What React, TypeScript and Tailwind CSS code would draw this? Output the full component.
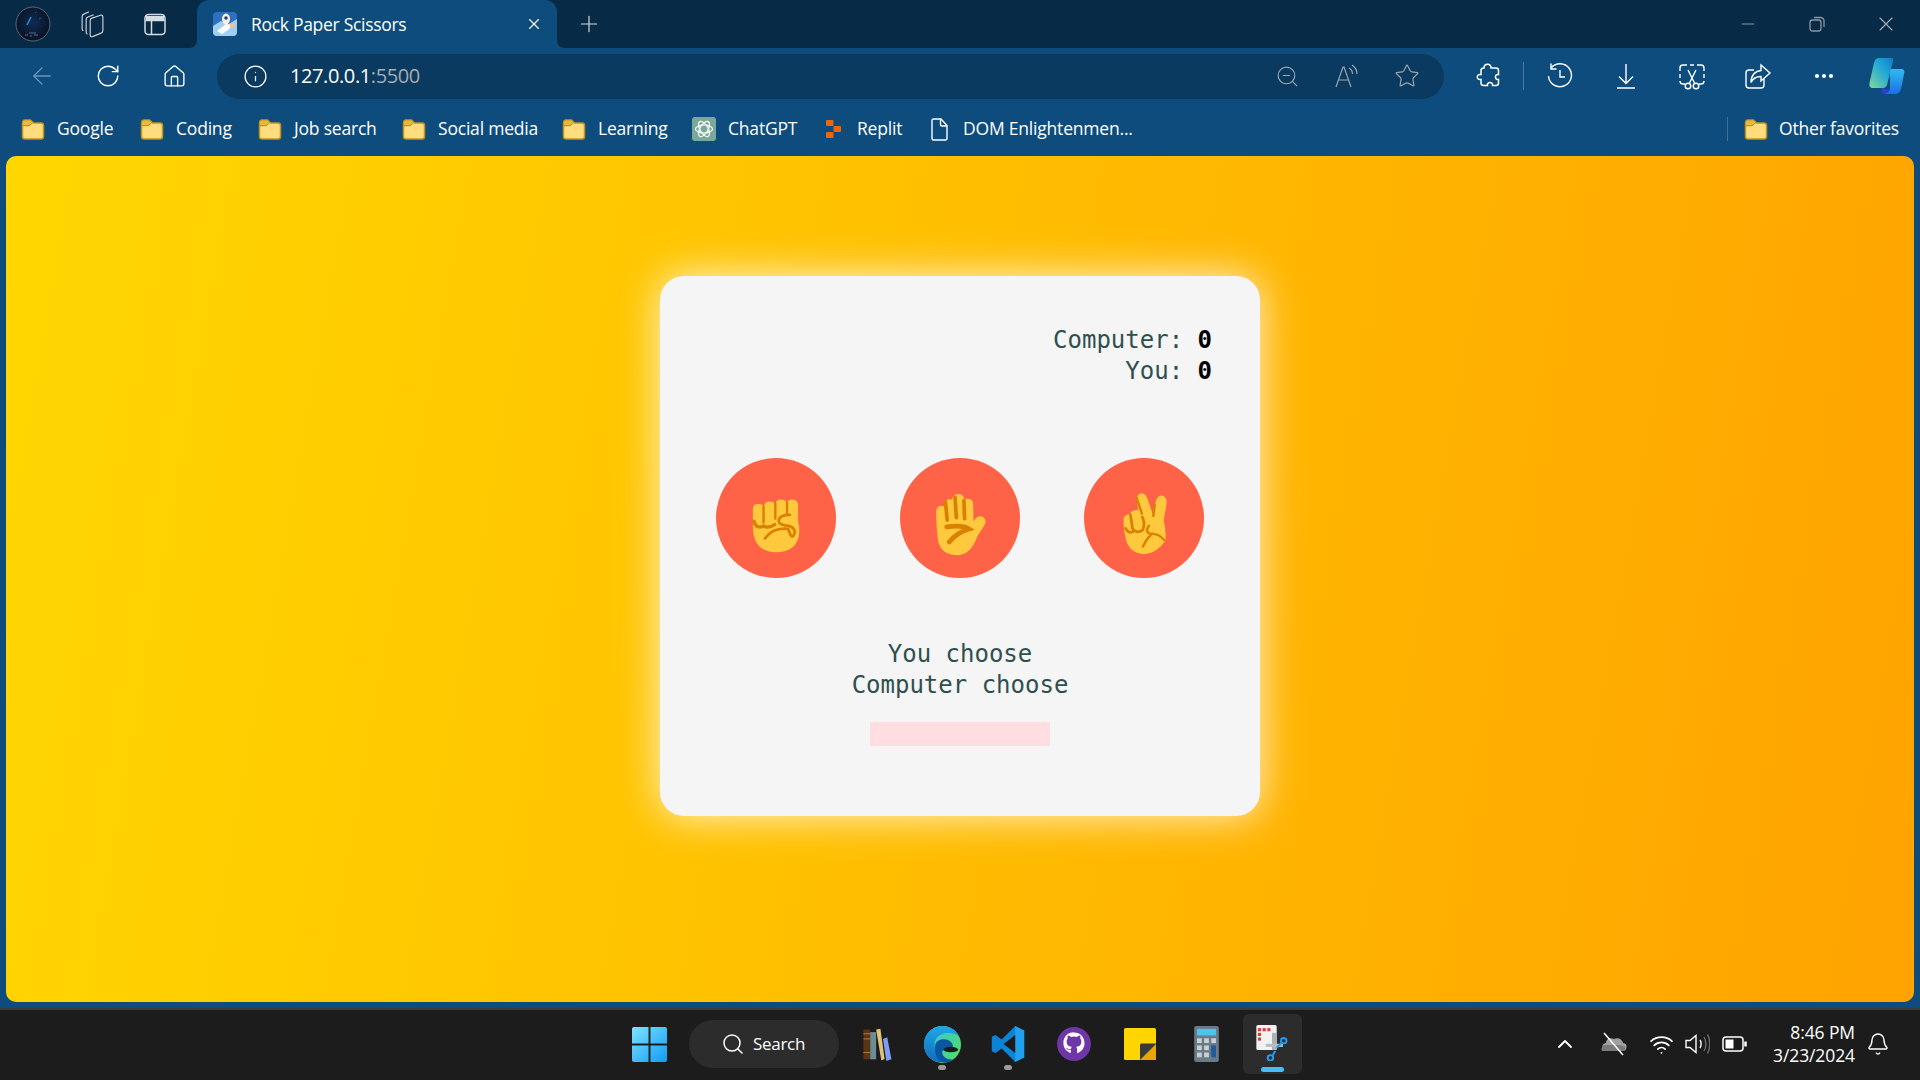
import React from 'react';
import { ArrowLeft, RotateCw, Home, Info, ZoomOut, Star, Plus, X, Minus, MoreHorizontal, Search, ChevronUp, Bell, Wifi } from 'lucide-react';

const bookmarks = [
  { label: 'Google', width: 'w-[119px]', icon: 'folder' },
  { label: 'Coding', width: 'w-[118px]', icon: 'folder' },
  { label: 'Job search', width: 'w-[144px]', icon: 'folder' },
  { label: 'Social media', width: 'w-[160px]', icon: 'folder' },
  { label: 'Learning', width: 'w-[130px]', icon: 'folder' },
  { label: 'ChatGPT', width: 'w-[129px]', icon: 'gpt' },
  { label: 'Replit', width: 'w-[106px]', icon: 'replit' },
  { label: 'DOM Enlightenmen...', width: 'w-[220px]', icon: 'doc' },
];

const Folder = () => (
  <svg width="24" height="24" viewBox="0 0 24 24">
    <path d="M1.500 6.500C1.500 4 2.500 3 4 3h5.500l3 3H20c1.700 0 2.500 1 2.500 2.500v11c0 1.500-.8 2.500-2.500 2.500H4c-1.500 0-2.500-1-2.500-2.500z" fill="#ffdc7d" stroke="#c1941c" strokeWidth="1.500" />
    <path d="M1.500 8.500h6.500l3-2.500" fill="none" stroke="#c1941c" strokeWidth="1.500" />
    <path d="M2.300 7.800V5c0-1 .7-1.300 1.700-1.300h5.300L11 6 8 7.800z" fill="#e9b93c" />
  </svg>
);

const BookmarkIcon = ({ kind }: { kind: string }) => {
  if (kind === 'folder') return <Folder />;
  if (kind === 'gpt')
    return (
      <svg width="24" height="24" viewBox="0 0 24 24">
        <rect width="24" height="24" rx="3" fill="#79a99a" />
        <g fill="none" stroke="#fff" strokeWidth="1.200">
          <ellipse cx="12" cy="12" rx="8.500" ry="4" />
          <ellipse cx="12" cy="12" rx="8.500" ry="4" transform="rotate(60 12 12)" />
          <ellipse cx="12" cy="12" rx="8.500" ry="4" transform="rotate(120 12 12)" />
        </g>
      </svg>
    );
  if (kind === 'replit')
    return (
      <svg width="24" height="24" viewBox="0 0 24 24" fill="#f26207">
        <rect x="5" y="3" width="7.500" height="6" rx="1" />
        <rect x="12.500" y="9" width="7.500" height="6" rx="1" />
        <rect x="5" y="15" width="7.500" height="6" rx="1" />
      </svg>
    );
  return (
    <svg width="24" height="24" viewBox="0 0 24 24" fill="none" stroke="#fff" strokeWidth="1.400">
      <path d="M5 3.500c0-1 .6-1.500 1.500-1.500h7.500l6 6.500v13c0 1-.6 1.500-1.500 1.500h-12c-.9 0-1.500-.5-1.500-1.500z" />
      <path d="M13.500 2v5.500c0 1 .5 1.500 1.500 1.500h5" />
    </svg>
  );
};

const Fist = () => (
  <svg width="52" height="57" viewBox="175 170 150 165" className="mt-[14px]">
    <path d="M183 205Q183 190 198 190Q211 190 214 197Q218 182 232 183Q245 184 248 190Q250 176 264 177Q278 178 282 186Q286 176 298 177Q314 178 314 195L314 240Q320 260 316 285Q305 330 250 330Q205 330 190 295Q183 280 183 260Z" fill="#ffc83d" />
    <g fill="none" stroke="#d98200" strokeLinecap="round" strokeWidth="7">
      <path d="M214 197L214 244M248 188L248 232M282 186L282 220" />
      <path d="M186 240Q192 264 214 254Q228 262 246 250" strokeWidth="10" />
      <path d="M290 222Q262 222 258 236Q256 250 275 252Q300 252 305 270Q300 292 292 280L285 262Q240 258 218 290" strokeWidth="8" />
    </g>
  </svg>
);

const Hand = () => (
  <svg width="55" height="65" viewBox="705 150 160 190" className="mt-[12px]">
    <path d="M714 205Q716 190 730 190Q738 190 740 195L738 180Q745 168 760 172Q764 155 782 156Q795 158 796 172Q805 168 815 172Q822 176 822 190L823 236Q832 220 845 221Q860 225 858 240Q855 250 835 278Q815 335 775 335Q730 335 720 295Q714 260 714 205Z" fill="#ffc83d" />
    <g fill="none" stroke="#d98200" strokeLinecap="round">
      <path d="M741 178L746 232M769 166L773 225M795 175L797 228" strokeWidth="11" />
      <path d="M745 252Q790 245 810 258Q775 268 752 296" strokeWidth="14" />
    </g>
  </svg>
);

const Victory = () => (
  <svg width="47" height="66" viewBox="1245 150 135 190" className="mt-[12px]">
    <path d="M1252 230Q1255 217 1270 216Q1275 205 1290 204L1295 206L1290 175Q1292 155 1308 157Q1318 160 1322 175L1338 222L1345 180Q1350 160 1365 163Q1378 170 1376 185L1368 235Q1376 270 1372 295Q1345 332 1310 332Q1275 330 1262 300Q1252 270 1252 230Z" fill="#ffc83d" />
    <g fill="none" stroke="#d98200" strokeLinecap="round" strokeWidth="7">
      <path d="M1290 170L1305 215M1342 190L1338 222" />
      <path d="M1272 218L1278 258Q1290 275 1308 262Q1315 240 1306 225" strokeWidth="8" />
      <path d="M1258 258Q1268 275 1280 266" strokeWidth="8" />
      <path d="M1325 250Q1315 265 1325 272Q1355 272 1370 292M1330 278Q1320 285 1308 310" />
    </g>
  </svg>
);

const IconSlot = ({ className, children }: { className: string; children: React.ReactNode }) => (
  <div className={`flex items-center justify-center shrink-0 ${className}`}>{children}</div>
);

const TaskIcon = ({ running, children }: { running?: boolean; children: React.ReactNode }) => (
  <div className="relative flex items-center justify-center shrink-0 w-[66px] h-[48px]">
    {children}
    {running && <div className="absolute bottom-[-2px] w-[8px] h-[5px] rounded-full bg-[#9b9b9b]" />}
  </div>
);

const TitleBar = () => (
  <div className="flex h-12 shrink-0 bg-[#072a47] text-white">
    <IconSlot className="w-[66px] h-12">
      <svg width="36" height="36" viewBox="0 0 36 36">
        <defs>
          <radialGradient id="sky" cx="0.500" cy="0.450" r="0.600">
            <stop offset="0" stopColor="#0f2c52" />
            <stop offset="1" stopColor="#080f1e" />
          </radialGradient>
        </defs>
        <circle cx="18" cy="18" r="17" fill="url(#sky)" stroke="#6a7b8b" strokeWidth="0.800" />
        <path d="M12 19L16 11" stroke="#2b9ce6" strokeWidth="1.200" />
        <path d="M20 7l1.500-1M24 13l2-1" stroke="#2a5f96" strokeWidth="1" />
        <path d="M10 29h3M15 30h2M19 29h4" stroke="#8a5a6a" strokeWidth="1" />
        <path d="M14 27h7" stroke="#33507a" strokeWidth="1.500" />
      </svg>
    </IconSlot>
    <IconSlot className="w-[52px] h-12">
      <svg width="25" height="27" viewBox="3.300 1.800 19.400 23.400" fill="none" stroke="#c9d3dc" strokeWidth="1">
        <path d="M11 10Q11 8.500 12.500 8L20 5.500Q22 5 22 7V19Q22 20.500 20.500 21L13 24Q11 24.500 11 22.500Z" />
        <path d="M14 5L9 7Q7.500 7.500 7.500 9V20Q7.500 21 8.500 22" />
        <path d="M10 2.500L5.500 4.500Q4 5 4 6.500V17Q4 18 5 19" />
      </svg>
    </IconSlot>
    <IconSlot className="w-[74px] h-12">
      <svg width="24" height="24" viewBox="0 0 24 24" fill="none" stroke="#d5dce2" strokeWidth="1.500">
        <rect x="2" y="2.500" width="20" height="20" rx="3.500" />
        <path d="M2.500 8.500h19" />
        <path d="M3 4h18v4H3z" fill="#d5dce2" stroke="none" />
        <path d="M8.500 8.500v14" />
      </svg>
    </IconSlot>
    <div className="relative flex items-center w-[360px] h-12 ml-[5px] mr-0 bg-[#0d4c7d] rounded-t-[12px] pl-[16px] pr-[14px]">
      <svg width="8" height="8" viewBox="0 0 8 8" className="absolute bottom-0 left-[-8px]"><path d="M8 0v8H0c5 0 8-3 8-8z" fill="#0d4c7d" /></svg>
      <svg width="8" height="8" viewBox="0 0 8 8" className="absolute bottom-0 right-[-8px]"><path d="M0 0v8h8c-5 0-8-3-8-8z" fill="#0d4c7d" /></svg>
      <svg width="24" height="24" viewBox="0 0 24 24" className="shrink-0">
        <rect width="24" height="24" rx="4" fill="#2f6fc4" />
        <path d="M0 14l8-5 6 4 10-6v13a4 4 0 0 1-4 4H4a4 4 0 0 1-4-4z" fill="#9fd0f2" />
        <ellipse cx="13" cy="7" rx="4" ry="5.500" fill="#f6efe2" />
        <path d="M4 19l9-7 7 1-5 5-6 4z" fill="#fff" />
        <circle cx="13" cy="6" r="1.800" fill="#25406e" />
        <path d="M17 12l5-1v4l-5 1z" fill="#f2c48a" />
      </svg>
      <span className="ml-[14px] text-[17.5px] font-['Open_Sans',sans-serif] tracking-[-0.3px] text-white grow">Rock Paper Scissors</span>
      <X size={18} strokeWidth={1.500} className="text-white" />
    </div>
    <IconSlot className="w-[64px] h-12"><Plus size={26} strokeWidth={1.100} className="text-[#d5dce2]" /></IconSlot>
    <div className="grow" />
    <IconSlot className="w-[69px] h-12"><Minus size={20} strokeWidth={1.200} className="text-[#8b98a4]" /></IconSlot>
    <IconSlot className="w-[70px] h-12">
      <svg width="18" height="18" viewBox="0 0 18 18" fill="none" stroke="#8b98a4" strokeWidth="1.300">
        <rect x="2" y="5" width="11" height="11" rx="2.500" />
        <path d="M6 2.500h6.500A3.500 3.500 0 0 1 16 6v6" />
      </svg>
    </IconSlot>
    <IconSlot className="w-[68px] h-12"><X size={24} strokeWidth={1.100} className="text-[#a4afb9]" /></IconSlot>
  </div>
);

const Toolbar = () => (
  <div className="flex items-center h-14 shrink-0 text-white">
    <IconSlot className="w-[84px] h-14"><ArrowLeft size={28} strokeWidth={1.100} className="text-[#6f97b8]" /></IconSlot>
    <IconSlot className="w-[48px] h-14"><RotateCw size={26} strokeWidth={1.300} /></IconSlot>
    <IconSlot className="w-[84px] h-14"><Home size={25} strokeWidth={1.300} /></IconSlot>
    <div className="flex items-center ml-px w-[1227px] h-[45px] rounded-full bg-[#0a3a60]">
      <IconSlot className="w-[76px] h-[45px]"><Info size={25} strokeWidth={1.200} /></IconSlot>
      <span className="ml-[-3px] text-[20px] font-['Open_Sans',sans-serif] tracking-[-0.4px]">
        127.0.0.1<span className="text-[#a3acb3]">:5500</span>
      </span>
      <div className="grow" />
      <IconSlot className="w-[60px] h-[45px]"><ZoomOut size={25} strokeWidth={1.100} className="text-[#9ca6ae]" /></IconSlot>
      <IconSlot className="w-[60px] h-[45px]">
        <svg width="26" height="26" viewBox="0 0 26 26" fill="none" stroke="#9ca6ae" strokeWidth="1.200">
          <path d="M2 24L9 4h1l7 20M4.500 17h10" />
          <path d="M15 5c2 1 3.500 3.500 3.500 6M18 2c3 2 5 5.500 5 9" />
        </svg>
      </IconSlot>
      <IconSlot className="w-[60px] h-[45px]"><Star size={26} strokeWidth={1.100} className="text-[#9ca6ae]" /></IconSlot>
      <div className="w-[7px]" />
    </div>
    <IconSlot className="w-[87px] h-14">
      <svg width="26" height="28" viewBox="0 0 26 28" fill="none" stroke="#fff" strokeWidth="1.500">
        <path d="M9 6c0-5 7-5 7 0h5c1.500 0 2.500 1 2.500 2.500v4c-4-1-4 6 0 5v3.500c0 1.500-1 2.500-2.500 2.500h-3.500c1-4-6-4-5 0H8.500C7 23.500 6 22.500 6 21v-3.500c-5 1-5-6 0-5V8.500C6 7 7 6 9 6z" />
      </svg>
    </IconSlot>
    <div className="w-px h-[28px] bg-[#51799a] ml-[-8px]" />
    <IconSlot className="w-[71px] h-14">
      <svg width="26" height="28" viewBox="0 0 26 28" fill="none" stroke="#fff" strokeWidth="1.400">
        <path d="M4 6a11.500 11.500 0 1 1-2.500 8" />
        <path d="M4 1.500V7h5.500" />
        <path d="M13 8v7h5" />
      </svg>
    </IconSlot>
    <IconSlot className="w-[61px] h-14">
      <svg width="24" height="28" viewBox="0 0 24 28" fill="none" stroke="#fff" strokeWidth="1.400">
        <path d="M12 2v19M5 14.500l7 7 7-7M3 26h18" />
      </svg>
    </IconSlot>
    <IconSlot className="w-[71px] h-14">
      <svg width="28" height="28" viewBox="0 0 28 28" fill="none" stroke="#fff" strokeWidth="1.400">
        <path d="M9 3h-4a3 3 0 0 0-3 3v3M2 12v4M2 19c0 2 1.500 3 3 3h2M12 3h4M19 3h4a3 3 0 0 1 3 3v3M26 12v4M26 19c0 2-1.500 3-3 3h-2" />
        <path d="M10 8l6.500 13M18 8l-6.500 13" />
        <circle cx="10" cy="24" r="2.800" />
        <circle cx="18" cy="24" r="2.800" />
      </svg>
    </IconSlot>
    <IconSlot className="w-[62px] h-14">
      <svg width="28" height="28" viewBox="0 0 28 28" fill="none" stroke="#fff" strokeWidth="1.400">
        <path d="M20 17v6a3 3 0 0 1-3 3H5a3 3 0 0 1-3-3V11a3 3 0 0 1 3-3h5" />
        <path d="M17 3l9 8-9 8v-4.500c-5 0-8 1.500-10 6 0-7 4-11.500 10-12z" />
      </svg>
    </IconSlot>
    <IconSlot className="w-[70px] h-14"><MoreHorizontal size={24} strokeWidth={2.200} /></IconSlot>
    <IconSlot className="w-[56px] h-14">
      <svg width="38" height="38" viewBox="0 0 38 38">
        <defs>
          <linearGradient id="cpA" x1="0" y1="1" x2="1" y2="0">
            <stop offset="0" stopColor="#7ed99a" />
            <stop offset="0.600" stopColor="#20a7d8" />
            <stop offset="1" stopColor="#0b7fc4" />
          </linearGradient>
          <linearGradient id="cpB" x1="0" y1="0" x2="0" y2="1">
            <stop offset="0" stopColor="#2dbdf0" />
            <stop offset="1" stopColor="#1c6fe8" />
          </linearGradient>
        </defs>
        <path d="M14 30l12 7h-9c-3 0-4-2-3-7z" fill="#2a3fd0" />
        <path d="M22 12h11c3 0 4 2 3 5l-3 15c-1 3-3 5-6 5H16c3 0 5-2 6-5z" fill="url(#cpB)" />
        <path d="M11 1h13c1.500 0 1.500 1 1 3l-6 24c-1 2-2 3-4 3H5c-3 0-4-2-3.500-5L6 6c.7-3 2-5 5-5z" fill="url(#cpA)" />
      </svg>
    </IconSlot>
  </div>
);

const BookmarksBar = () => (
  <div className="flex items-center h-[52px] shrink-0 pl-[21px] pr-[21px] pb-[3px] text-white text-[17.5px] font-['Open_Sans',sans-serif] tracking-[-0.2px]">
    {bookmarks.map((b) => (
      <div key={b.label} className={`flex items-center gap-[12px] shrink-0 ${b.width}`}>
        <BookmarkIcon kind={b.icon} />
        <span>{b.label}</span>
      </div>
    ))}
    <div className="grow" />
    <div className="w-px h-[24px] bg-[#3f7099] mr-[16px]" />
    <div className="flex items-center gap-[11px]">
      <Folder />
      <span>Other favorites</span>
    </div>
  </div>
);

const GameCard = () => (
  <div className="w-[600px] h-[540px] mt-[120px] pt-[49px] rounded-[24px] bg-[#f5f5f5] shadow-[0_0_40px_rgba(255,255,255,0.85)] font-['DejaVu_Sans_Mono',monospace] text-[24px] leading-[31px] text-[#2f4f4f]">
    <div className="pr-12 text-right">
      <div>Computer: <span className="font-bold text-black">0</span></div>
      <div>You: <span className="font-bold text-black">0</span></div>
    </div>
    <div className="flex justify-center gap-[64px] mt-[71px]">
      <div className="flex justify-center items-center w-[120px] h-[120px] rounded-full bg-[#ff6347]"><Fist /></div>
      <div className="flex justify-center items-center w-[120px] h-[120px] rounded-full bg-[#ff6347]"><Hand /></div>
      <div className="flex justify-center items-center w-[120px] h-[120px] rounded-full bg-[#ff6347]"><Victory /></div>
    </div>
    <div className="mt-[61px] text-center">
      <div>You choose</div>
      <div>Computer choose</div>
    </div>
    <div className="w-[180px] h-[24px] mt-[21px] mx-auto bg-[#ffdde1]" />
  </div>
);

const Taskbar = () => (
  <div className="flex items-center h-[72px] shrink-0 pl-[616px] pb-[2px] bg-[#1c1c1c] border-t-2 border-[#3c3a39] text-white font-['Open_Sans',sans-serif]">
    <TaskIcon>
      <svg width="35" height="35" viewBox="0 0 36 36">
        <defs>
          <linearGradient id="winA" x1="0" y1="0" x2="1" y2="1">
            <stop offset="0" stopColor="#7fe3ff" />
            <stop offset="1" stopColor="#0f9cf5" />
          </linearGradient>
        </defs>
        <path d="M0 2a2 2 0 0 1 2-2h15v17H0zM19 0h15a2 2 0 0 1 2 2v15H19zM0 19h17v17H2a2 2 0 0 1-2-2zM19 19h17v15a2 2 0 0 1-2 2H19z" fill="url(#winA)" />
      </svg>
    </TaskIcon>
    <div className="flex items-center ml-[7px] mr-[4px] w-[150px] h-[48px] pl-[32px] gap-[8px] rounded-full bg-[#2c2c2c] text-[17px] tracking-[-0.3px]">
      <Search size={24} strokeWidth={1.500} />
      <span>Search</span>
    </div>
    <TaskIcon>
      <svg width="32" height="34" viewBox="0 0 34 40" className="ml-[2px]">
        <rect x="1" y="3" width="8" height="35" fill="#5a3415" />
        <path d="M1 8h8M1 14h8M1 30h8" stroke="#c58b3a" strokeWidth="1" />
        <rect x="9" y="6" width="7" height="32" fill="#6c8c94" />
        <path d="M16 3l5-1 5 36-4 1z" fill="#e0c27a" />
        <path d="M24 14l5-2 5 26-6 2z" fill="#7d9df5" />
      </svg>
    </TaskIcon>
    <TaskIcon running>
      <svg width="37" height="37" viewBox="0 0 40 40">
        <defs>
          <linearGradient id="edgeA" x1="0" y1="0" x2="1" y2="0.700">
            <stop offset="0" stopColor="#35c1f1" />
            <stop offset="1" stopColor="#4fdc6e" />
          </linearGradient>
          <linearGradient id="edgeB" x1="0" y1="0" x2="0" y2="1">
            <stop offset="0" stopColor="#1fa8e6" />
            <stop offset="1" stopColor="#0f6cbd" />
          </linearGradient>
        </defs>
        <circle cx="20" cy="20" r="20" fill="url(#edgeA)" />
        <path d="M0 20C0 8 9 0 20 0c8 0 14 4 18 11-7-5-20-5-25 3-4 7 0 18 10 25C10 41 0 32 0 20z" fill="url(#edgeB)" />
        <path d="M12 22c0-7 8-9 14-7 4 2 6 5 5 8-6 2-13 2-11 7 1 4 6 7 12 6-4 3-8 4-12 3-8-3-8-11-8-17z" fill="#0b56a0" />
        <ellipse cx="29" cy="25.500" rx="8" ry="3" fill="#1c1c1c" />
      </svg>
    </TaskIcon>
    <TaskIcon running>
      <svg width="36" height="36" viewBox="0 0 36 40">
        <path d="M26 0l10 5v30l-10 5-15-15-7 5-4-2v-16l4-2 7 5z" fill="#0a84d6" />
        <path d="M26 0l10 5v30l-10 5z" fill="#21a0ee" />
        <path d="M26 10v20l-13-10z" fill="#1c1c1c" />
      </svg>
    </TaskIcon>
    <TaskIcon>
      <svg width="34" height="34" viewBox="0 0 32 32">
        <circle cx="16" cy="16" r="16" fill="#6e36a6" />
        <path d="M16 5c-6 0-10 4.500-10 10 0 5 3 8 7 9.500v-3c-3 .7-4-1-4.500-2 2 .8 3 2.200 4.600 1.200.2-1 .5-1.500 1-2-3-.3-5-1.500-5-5 0-1.200.4-2 1-2.800-.2-.7-.2-1.800.2-2.900 1.300 0 2.300.7 3 1.300a10 10 0 0 1 5.400 0c.7-.6 1.700-1.300 3-1.300.4 1.100.4 2.200.2 2.900.6.800 1 1.600 1 2.800 0 3.500-2 4.700-5 5 .6.600 1 1.400 1 2.500v3.500c4-1.500 7-4.500 7-9.500 0-5.500-4-10-10-10z" fill="#fff" />
      </svg>
    </TaskIcon>
    <TaskIcon>
      <svg width="32" height="32" viewBox="0 0 30 30">
        <rect width="30" height="30" rx="1.500" fill="#ffd500" />
        <path d="M15 30V16c0-1 .7-1.500 1.500-1.500H30V29c0 .8-.5 1-1.500 1z" fill="#3a3a3a" />
        <path d="M15 30l15-15v15z" fill="#e6a700" />
      </svg>
    </TaskIcon>
    <TaskIcon>
      <svg width="27" height="36" viewBox="0 0 26 38">
        <rect width="26" height="38" rx="2" fill="#6a7a86" />
        <rect x="3" y="3" width="20" height="7" fill="#4fc3ec" />
        <g fill="#c8d0d6">
          <rect x="3" y="13" width="5" height="5" /><rect x="10.500" y="13" width="5" height="5" /><rect x="18" y="13" width="5" height="5" />
          <rect x="3" y="20.500" width="5" height="5" /><rect x="10.500" y="20.500" width="5" height="5" />
          <rect x="3" y="28" width="5" height="5" /><rect x="10.500" y="28" width="5" height="5" />
        </g>
        <rect x="18" y="20.500" width="5" height="12.500" fill="#1f5a9c" />
      </svg>
    </TaskIcon>
    <div className="flex justify-center shrink-0 w-[66px]">
      <div className="relative flex justify-center items-center w-[59px] h-[60px] rounded-[6px] bg-[#2c2c2c]">
        <svg width="36" height="36" viewBox="0 0 40 46" className="mb-[3px]">
          <rect x="0" y="0" width="26" height="32" rx="2" fill="#f2f2f2" />
          <g fill="#d8402a"><rect x="2" y="4" width="4" height="4" /><rect x="8" y="4" width="4" height="4" /><rect x="14" y="4" width="4" height="4" /><rect x="2" y="10" width="4" height="4" /><rect x="2" y="16" width="4" height="4" /></g>
          <path d="M20 10v22l6 0V10z" fill="#a9b2b8" />
          <path d="M12 24h22v4H12z" fill="#b7bec3" />
          <g fill="none" stroke="#1f9cf0" strokeWidth="2.500">
            <circle cx="35" cy="20" r="3.500" />
            <circle cx="18" cy="42" r="3.500" />
            <path d="M32 23l-6 6M21 39l3-6" />
          </g>
        </svg>
        <div className="absolute bottom-[2px] w-[23px] h-[5px] rounded-full bg-[#47bdf5]" />
      </div>
    </div>
    <div className="grow" />
    <IconSlot className="w-[40px] h-[48px]"><ChevronUp size={24} strokeWidth={1.800} /></IconSlot>
    <IconSlot className="w-[56px] h-[48px]">
      <svg width="28" height="24" viewBox="0 0 28 24">
        <path d="M8 19h15a4 4 0 0 0 1-8c-1-4-5-6-9-4-4-2-8 0-8 4a4 4 0 0 0 1 8z" fill="#a0a0a0" />
        <path d="M3 19a4 4 0 0 1 4-6h14l5 2c1 2 0 4-3 4z" fill="#7a7a7a" />
        <path d="M5 1l19 22" stroke="#fff" strokeWidth="1.500" />
      </svg>
    </IconSlot>
    <IconSlot className="w-[40px] h-[48px]"><Wifi size={25} strokeWidth={1.700} /></IconSlot>
    <IconSlot className="w-[32px] h-[48px]">
      <svg width="26" height="26" viewBox="0 0 26 26" fill="none" strokeWidth="1.400" stroke="#fff">
        <path d="M2 9.500v7h4l6 5V4.500l-6 5z" />
        <path d="M16 9c1.500 2 1.500 6 0 8" />
        <path d="M20 6c2.500 4 2.500 10 0 14M23.500 3.500c3 5 3 14 0 19" stroke="#6b6b6b" />
      </svg>
    </IconSlot>
    <IconSlot className="w-[44px] h-[48px]">
      <svg width="26" height="16" viewBox="0 0 26 16" fill="none" stroke="#fff" strokeWidth="1.500">
        <rect x="1" y="1" width="20" height="14" rx="3" />
        <rect x="3.500" y="3.500" width="8" height="9" fill="#fff" stroke="none" />
        <path d="M23.500 5.500v5" strokeWidth="2.500" />
      </svg>
    </IconSlot>
    <div className="ml-[16px] text-right text-[17.5px] leading-[23px] tracking-[-0.1px]">
      <div>8:46 PM</div>
      <div>3/23/2024</div>
    </div>
    <IconSlot className="w-[46px] h-[48px]"><Bell size={24} strokeWidth={1.400} /></IconSlot>
    <div className="w-[19px]" />
  </div>
);

const App = () => {
  return (
    <div className="flex flex-col w-full h-screen overflow-hidden bg-[#0d4c7d]">
      <TitleBar />
      <Toolbar />
      <BookmarksBar />
      <div className="flex justify-center grow mx-[6px] mb-[6px] rounded-[10px] bg-[linear-gradient(100deg,#ffd700,#ffa300)]">
        <GameCard />
      </div>
      <Taskbar />
    </div>
  );
};

export default App;
